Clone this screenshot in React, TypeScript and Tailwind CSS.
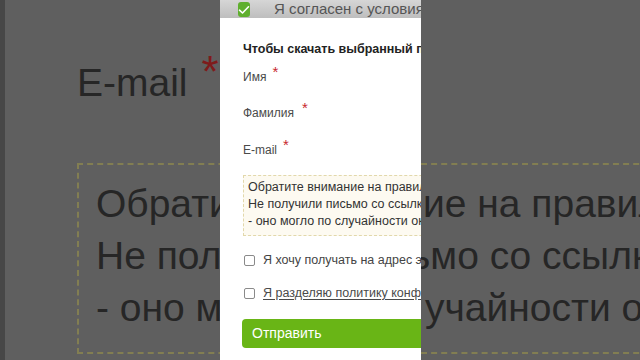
import React from "react";

const bgText = "text-[39px] leading-[52px] text-[#262626] whitespace-nowrap";

const Star: React.FC<{ ml?: string }> = ({ ml = "ml-[6px]" }) => (
  <span className={`${ml} text-[15px] text-[#c8282e] align-[4px]`}>*</span>
);

const Field: React.FC<{ label: string; className: string; ml?: string }> = ({
  label,
  className,
  ml,
}) => (
  <div className={`h-[16px] leading-[16px] text-[12px] text-[#4a4a4a] ${className}`}>
    {label}
    <Star ml={ml} />
  </div>
);

const Box: React.FC = () => (
  <div className="w-[11px] h-[11px] shrink-0 rounded-[2px] border border-[#8a8a8a] bg-white" />
);

export default function App() {
  return (
    <div className="w-[640px] h-[360px] flex overflow-hidden font-['Liberation_Sans',Arial,sans-serif]">
      {/* blurred zoomed background, left */}
      <div className="w-[220px] h-full shrink-0 overflow-hidden bg-[#5f5f5f] border-l-[5px] border-[#474747]">
        <div className="pl-[72px] pt-[63px] h-[104px] flex items-start whitespace-nowrap">
          <span className="text-[39px] leading-[39px] text-[#262626]">E-mail</span>
          <span className="ml-[14px] -mt-[11px] text-[44px] leading-[39px] text-[#7e1b1b]">*</span>
        </div>
        <div className="ml-[72px] mt-[59px] w-[400px] h-[191px] border-2 border-dashed border-[#827e52] pl-[17px] pt-[13px]">
          <div className={bgText}>Обратите</div>
          <div className={bgText}>Не получили</div>
          <div className={bgText}>- оно могло</div>
        </div>
      </div>

      {/* form panel */}
      <div className="w-[201px] h-full shrink-0 overflow-hidden bg-white flex flex-col">
        <div className="h-[18px] shrink-0 flex items-start bg-gradient-to-b from-[#d6d6d6] to-[#bebebe] whitespace-nowrap">
          <div className="ml-[18px] mt-[2px] w-[16px] h-[15px] rounded-[3px] bg-[#5faf2e] flex items-center justify-center">
            <svg width="12" height="10" viewBox="0 0 12 10" fill="none">
              <path d="M1.5 5.2 L4.5 8 L10.5 1.8" stroke="#fff" strokeWidth="1.6" strokeLinecap="round" strokeLinejoin="round" />
            </svg>
          </div>
          <span className="ml-[24px] text-[15px] leading-[17px] text-[#555]">Я согласен с условиями</span>
        </div>

        <div className="pl-[23px] flex flex-col">
          <div className="mt-[23px] h-[16px] leading-[16px] text-[12.5px] font-bold text-[#222] whitespace-nowrap">
            Чтобы скачать выбранный продукт
          </div>
          <Field label="Имя" className="mt-[7px]" />
          <Field label="Фамилия" className="mt-[20px]" ml="ml-[8px]" />
          <Field label="E-mail" className="mt-[21px]" />

          <div className="mt-[22px] w-[260px] h-[61px] border border-dashed border-[#e2d8ab] bg-[#fdfaf1] pl-[4px] pt-[3px] text-[12.5px] leading-[17px] text-[#333] whitespace-nowrap">
            <div>Обратите внимание на правила</div>
            <div>Не получили письмо со ссылкой</div>
            <div>- оно могло по случайности оказаться</div>
          </div>

          <div className="mt-[18px] flex items-center gap-[8px] pl-[1px] h-[12px] text-[12.5px] text-[#444] whitespace-nowrap">
            <Box />
            <span>Я хочу получать на адрес электронной почты</span>
          </div>
          <div className="mt-[21px] flex items-center gap-[8px] pl-[1px] h-[12px] text-[12.5px] text-[#4a4a4a] whitespace-nowrap">
            <Box />
            <span className="underline underline-offset-2">Я разделяю политику конфиденциальности</span>
          </div>

          <div className="mt-[20px] -ml-[1px] w-[220px] h-[29px] rounded-[4px] bg-[#69b516] pl-[10px] flex items-center text-[14px] text-white whitespace-nowrap">
            Отправить
          </div>
        </div>
      </div>

      {/* blurred zoomed background, right */}
      <div className="flex-1 h-full overflow-hidden bg-[#5f5f5f]">
        <div className="mt-[163px] w-[400px] h-[191px] border-y-2 border-dashed border-[#827e52] pt-[13px]">
          <div className={`${bgText} ml-[2px]`}>ие на правила</div>
          <div className={`${bgText} -ml-[11px]`}>ьмо со ссылкой</div>
          <div className={`${bgText} ml-[4px]`}>учайности оказаться</div>
        </div>
      </div>
    </div>
  );
}
